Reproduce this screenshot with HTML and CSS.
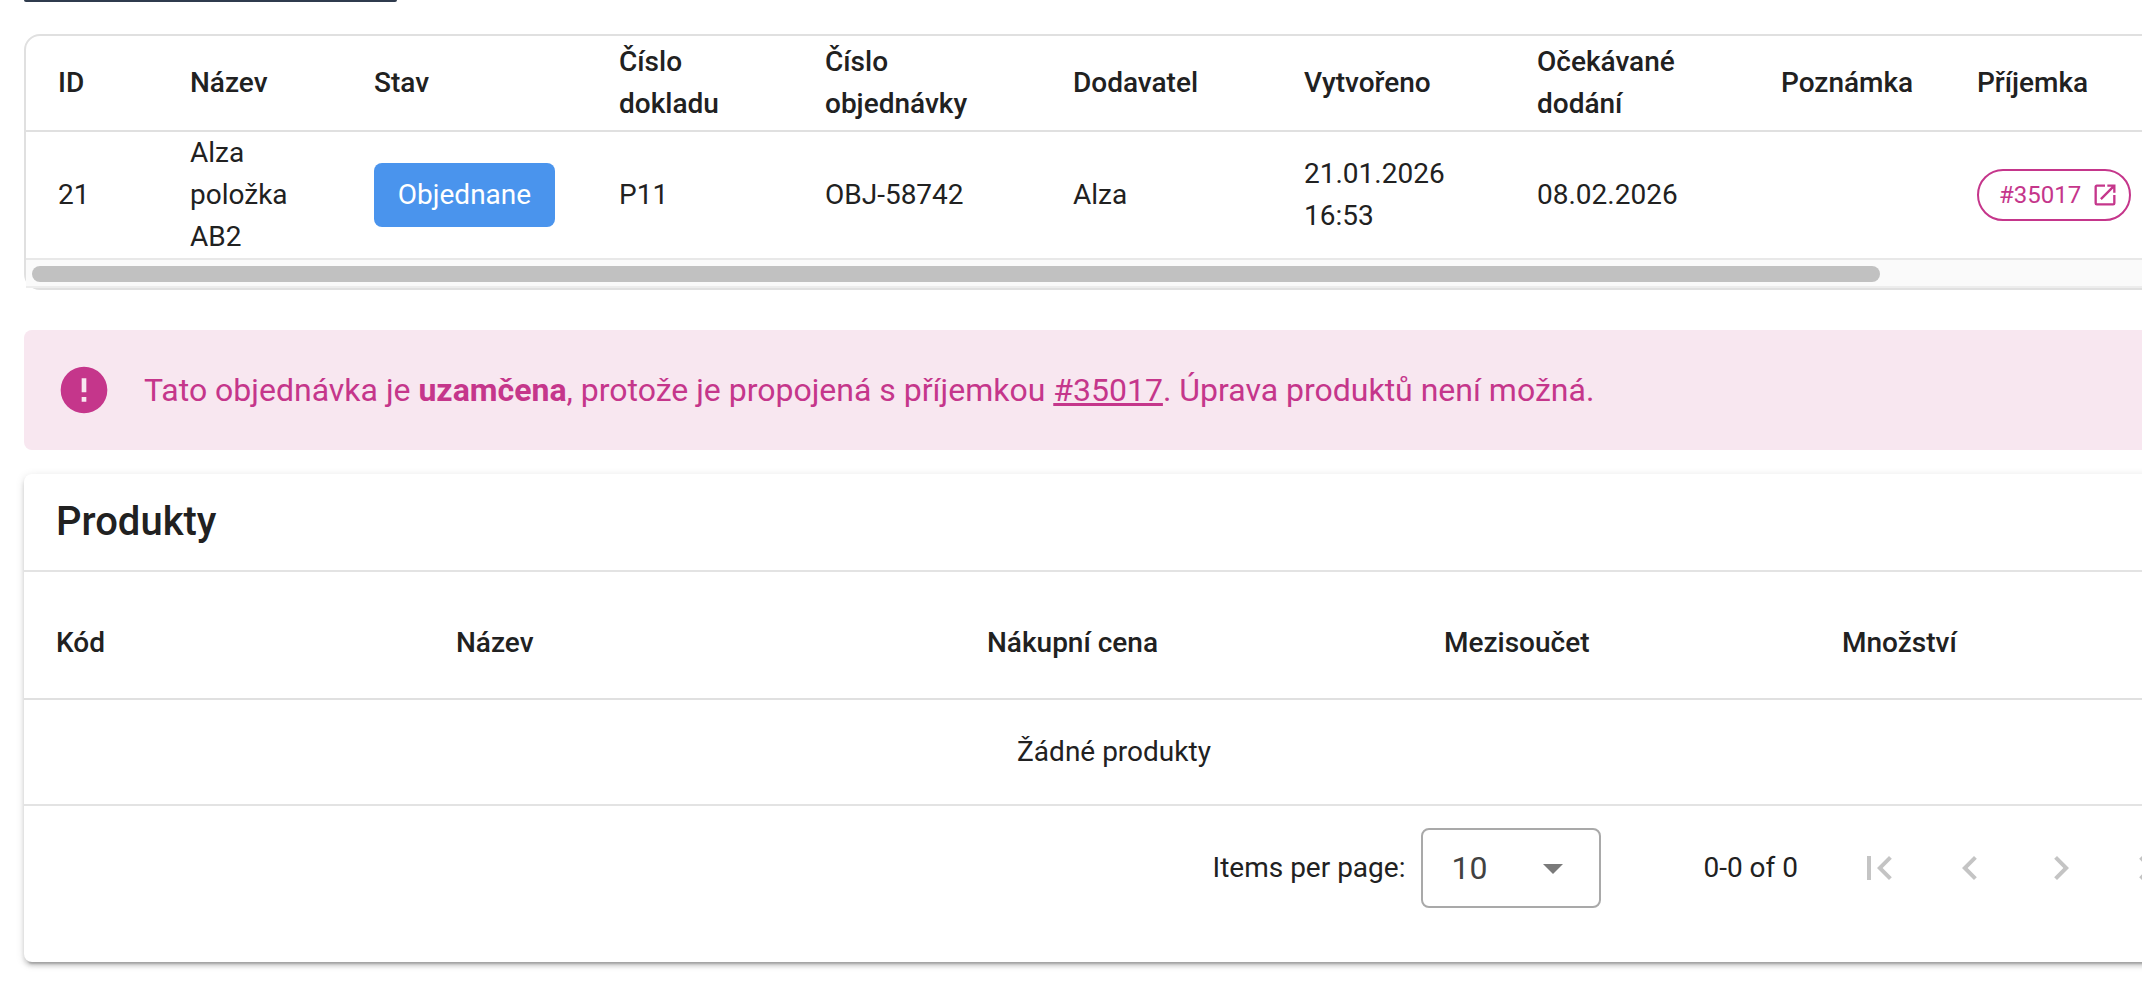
FILE: index.html
```html
<!DOCTYPE html>
<html lang="cs">
<head>
<meta charset="utf-8">
<title>Objednávka</title>
<link rel="stylesheet" href="styles.css">
</head>
<body>
<main class="page">
  <div class="toolbar"></div>

  <section class="order">
    <div class="order-scroll">
      <table class="order-table">
        <colgroup>
          <col class="c-id"><col class="c-name"><col class="c-state"><col class="c-doc"><col class="c-number"><col class="c-supplier"><col class="c-created"><col class="c-expected"><col class="c-note"><col class="c-receipt">
        </colgroup>
        <thead>
          <tr>
            <th>ID</th><th>Název</th><th>Stav</th><th>Číslo dokladu</th><th>Číslo objednávky</th><th>Dodavatel</th><th>Vytvořeno</th><th>Očekávané dodání</th><th>Poznámka</th><th>Příjemka</th>
          </tr>
        </thead>
        <tbody>
          <tr>
            <td>21</td>
            <td>Alza položka AB2</td>
            <td><span class="badge">Objednane</span></td>
            <td>P11</td>
            <td>OBJ-58742</td>
            <td>Alza</td>
            <td>21.01.2026 16:53</td>
            <td>08.02.2026</td>
            <td></td>
            <td><a class="chip" href="#35017">#35017<svg class="chip-icon" viewBox="0 0 24 24" aria-hidden="true"><path d="M14,3V5H17.59L7.76,14.83L9.17,16.24L19,6.41V10H21V3M19,19H5V5H12V3H5C3.89,3 3,3.9 3,5V19A2,2 0 0,0 5,21H19A2,2 0 0,0 21,19V12H19V19Z"/></svg></a></td>
          </tr>
        </tbody>
      </table>
    </div>
    <div class="track"><div class="thumb"></div></div>
  </section>

  <section class="alert" role="alert">
    <svg class="alert-icon" viewBox="0 0 24 24" aria-hidden="true"><path d="M13,13H11V7H13M13,17H11V15H13M12,2A10,10 0 0,0 2,12A10,10 0 0,0 12,22A10,10 0 0,0 22,12A10,10 0 0,0 12,2Z"/></svg>
    <p class="alert-text">Tato objednávka je <strong>uzamčena</strong>, protože je propojená s příjemkou <a href="#35017">#35017</a>. Úprava produktů není možná.</p>
  </section>

  <section class="card">
    <h2 class="card-title">Produkty</h2>
    <table class="products">
      <colgroup>
        <col class="p-code"><col class="p-name"><col class="p-price"><col class="p-subtotal"><col class="p-amount">
      </colgroup>
      <thead>
        <tr><th>Kód</th><th>Název</th><th>Nákupní cena</th><th>Mezisoučet</th><th>Množství</th></tr>
      </thead>
      <tbody>
        <tr><td class="empty" colspan="5">Žádné produkty</td></tr>
      </tbody>
    </table>
    <footer class="footer">
      <label for="per-page">Items per page:</label>
      <div class="select-box">
        <select id="per-page" class="select"><option>10</option><option>25</option><option>50</option></select>
        <svg class="caret" viewBox="0 0 24 24" aria-hidden="true"><path d="M7,10L12,15L17,10H7Z"/></svg>
      </div>
      <span class="range">0-0 of 0</span>
      <nav class="pager" aria-label="Stránkování">
        <button class="page-btn" disabled aria-label="První"><svg viewBox="0 0 24 24"><path d="M18.41,16.59L13.82,12L18.41,7.41L17,6L11,12L17,18L18.41,16.59M6,6H8V18H6V6Z"/></svg></button>
        <button class="page-btn" disabled aria-label="Předchozí"><svg viewBox="0 0 24 24"><path d="M15.41,16.58L10.83,12L15.41,7.41L14,6L8,12L14,18L15.41,16.58Z"/></svg></button>
        <button class="page-btn" disabled aria-label="Další"><svg viewBox="0 0 24 24"><path d="M8.59,16.58L13.17,12L8.59,7.41L10,6L16,12L10,18L8.59,16.58Z"/></svg></button>
        <button class="page-btn" disabled aria-label="Poslední"><svg viewBox="0 0 24 24"><path d="M5.59,7.41L10.18,12L5.59,16.59L7,18L13,12L7,6L5.59,7.41M16,6H18V18H16V6Z"/></svg></button>
      </nav>
    </footer>
  </section>
</main>
</body>
</html>
```

FILE: styles.css
```css
* { box-sizing: border-box; }

body {
  margin: 0;
  overflow: hidden;
  background: #fff;
  color: #212121;
  font-family: Roboto, "Noto Sans", sans-serif;
  font-size: 28px;
  line-height: 42px;
}

/* The content area is wider than the window and runs off its right edge. */
.page {
  margin-right: -62px;
  padding: 0 0 32px 24px;
}

.toolbar {
  width: 373px;
  height: 2px;
  margin-bottom: 32px;
  background: #2f3b4d;
  border-radius: 0 0 8px 8px;
}

.order {
  border: 2px solid #e0e0e0;
  border-radius: 16px;
}

.order-scroll {
  overflow: hidden;
  border-radius: 14px 14px 0 0;
}

table {
  border-collapse: separate;
  border-spacing: 0;
  table-layout: fixed;
}

th, td {
  padding: 0 32px;
  text-align: left;
  vertical-align: middle;
  font-weight: 400;
}

th {
  font-weight: 500;
  border-bottom: 2px solid #e0e0e0;
}

.order-table { width: 2540px; }
.order-table th { height: 96px; }
.order-table td { height: 126px; }

.c-id { width: 132px; }
.c-name { width: 184px; }
.c-state { width: 245px; }
.c-doc { width: 206px; }
.c-number { width: 248px; }
.c-supplier { width: 231px; }
.c-created { width: 233px; }
.c-expected { width: 244px; }
.c-note { width: 196px; }

.badge {
  display: flex;
  align-items: center;
  justify-content: center;
  height: 64px;
  border-radius: 8px;
  background: #4a94ed;
  color: #fff;
}

.chip {
  display: inline-flex;
  align-items: center;
  gap: 10px;
  height: 52px;
  padding: 0 10px 0 20px;
  border: 2px solid #c5368b;
  border-radius: 26px;
  color: #c5368b;
  font-size: 24px;
  text-decoration: none;
  vertical-align: middle;
}

.chip-icon {
  width: 28px;
  height: 28px;
  fill: currentColor;
}

.track {
  padding: 6px 6px 4px;
  background: #fafafa;
  border-top: 2px solid #e8e8e8;
  border-bottom: 2px solid #ededed;
}

.thumb {
  width: 85.4%;
  height: 16px;
  border-radius: 8px;
  background: #c1c1c1;
}

.alert {
  display: flex;
  align-items: center;
  gap: 32px;
  margin-top: 40px;
  padding: 32px;
  border-radius: 8px;
  background: #f8e7f0;
  color: #c5368b;
}

.alert-icon {
  width: 56px;
  height: 56px;
  fill: currentColor;
}

.alert-text {
  margin: 0;
  font-size: 32px;
  line-height: 48px;
}

.alert-text strong { font-weight: 700; }
.alert-text a { color: inherit; text-decoration-thickness: 3px; }

.card {
  margin-top: 24px;
  border-radius: 8px;
  background: #fff;
  box-shadow: 0 6px 2px -4px rgba(0, 0, 0, .2), 0 4px 4px rgba(0, 0, 0, .14), 0 2px 10px rgba(0, 0, 0, .12);
}

.card-title {
  margin: 0;
  padding: 16px 32px;
  border-bottom: 2px solid #e3e3e3;
  font-size: 40px;
  font-weight: 500;
  line-height: 64px;
}

.products { width: 100%; }
.products th { height: 128px; padding-top: 16px; }
.products .empty {
  height: 106px;
  border-bottom: 2px solid #e3e3e3;
  text-align: center;
}

.p-code { width: 400px; }
.p-name { width: 531px; }
.p-price { width: 457px; }
.p-subtotal { width: 398px; }

.footer {
  display: flex;
  align-items: center;
  justify-content: flex-end;
  padding: 22px 10px 54px;
}

.select-box {
  position: relative;
  margin-left: 16px;
}

.select {
  appearance: none;
  display: block;
  width: 180px;
  height: 80px;
  padding: 0 28px;
  border: 2px solid #a9a9a9;
  border-radius: 8px;
  background: #fff;
  color: #424242;
  font-family: inherit;
  font-size: 32px;
}

.caret {
  position: absolute;
  top: 16px;
  right: 24px;
  width: 48px;
  height: 48px;
  fill: #7a7a7a;
  pointer-events: none;
}

.range { margin: 0 39px 0 102px; }

.pager {
  display: flex;
  gap: 7px;
}

.page-btn {
  display: flex;
  align-items: center;
  justify-content: center;
  width: 84px;
  height: 80px;
  padding: 0;
  border: 0;
  background: none;
}

.page-btn svg {
  width: 48px;
  height: 48px;
  fill: #c4c4c4;
}
```
